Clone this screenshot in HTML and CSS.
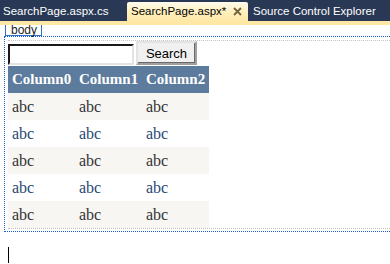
FILE: index.html
```html
<!DOCTYPE html>
<html lang="en">
<head>
    <meta charset="UTF-8">
    <title>SearchPage.aspx</title>
    <link rel="stylesheet" href="styles.css">
</head>
<body>
    <!-- Document tabs -->
    <div class="tabs">
        <div class="tab">SearchPage.aspx.cs</div>
        <div class="tab active">
            SearchPage.aspx*
            <svg class="close" width="9" height="9" viewBox="0 0 9 9">
                <path d="M1 1 L8 8 M8 1 L1 8" stroke="#75633d" stroke-width="1.8" fill="none"/>
            </svg>
        </div>
        <div class="tab">Source Control Explorer</div>
    </div>
    <div class="tab-strip"></div>

    <!-- Design surface -->
    <div class="designer">
        <div class="tag-label">body</div>
        <div class="sel-body">
            <div class="form">
                <div class="search-row">
                    <input type="text" class="search-input">
                    <button class="search-button">Search</button>
                </div>
                <table class="grid">
                    <tr class="grid-header">
                        <th>Column0</th><th>Column1</th><th>Column2</th>
                    </tr>
                    <tr class="row"><td>abc</td><td>abc</td><td>abc</td></tr>
                    <tr class="alt-row"><td>abc</td><td>abc</td><td>abc</td></tr>
                    <tr class="row"><td>abc</td><td>abc</td><td>abc</td></tr>
                    <tr class="alt-row"><td>abc</td><td>abc</td><td>abc</td></tr>
                    <tr class="row"><td>abc</td><td>abc</td><td>abc</td></tr>
                </table>
            </div>
        </div>
        <div class="caret"></div>
    </div>
</body>
</html>
```

FILE: styles.css
```css
/* Reset */
body {
    margin: 0;
    padding: 0;
    background: #fff;
    overflow: hidden;
    font-family: "Liberation Sans", Arial, sans-serif;
}

/* Tab bar */
.tabs {
    display: flex;
    align-items: flex-end;
    height: 21px;
    background-color: #293955;
}

.tab {
    height: 19px;
    line-height: 19px;
    padding: 0 3px;
    font-size: 11.5px;
    color: #fff;
    white-space: nowrap;
}

.tab:first-child {
    width: 121px;
}

.tab.active {
    display: flex;
    align-items: center;
    width: 113px;
    padding: 0 4px;
    color: #000;
    background: linear-gradient(#fffbee, #fff0bf 50%, #ffe8a6);
    border-radius: 2px 2px 0 0;
}

.tab.active .close {
    margin-left: auto;
    margin-right: 2px;
}

.tab.active + .tab {
    padding-left: 5px;
}

.tab-strip {
    height: 4px;
    background-color: #ffe8a6;
}

/* Designer */
.designer {
    height: 239px;
}

.tag-label {
    width: max-content;
    margin-left: 5px;
    height: 10px;
    line-height: 10px;
    padding: 0 4px 0 5px;
    font-size: 12px;
    color: #1e1e1e;
    border: 1px solid #2f6fc8;
    border-top: none;
}

.sel-body {
    margin-left: 4px;
    padding: 3px 0 2px 3px;
    border: 1px dotted #1c5ad0;
    border-right: none;
}

.form {
    border-top: 1px dotted #c4c4c4;
    border-bottom: 1px dotted #c4c4c4;
}

.search-row {
    display: flex;
    align-items: flex-end;
    gap: 2px;
    height: 24px;
    margin-bottom: 1px;
}

.search-input {
    box-sizing: border-box;
    width: 126px;
    height: 21px;
    margin: 0;
    border: 2px inset #e3e3e3;
    border-top-color: #6e6e6e;
    border-left-color: #6e6e6e;
    background: #fff;
}

.search-button {
    box-sizing: border-box;
    width: 61px;
    height: 24px;
    margin: 0;
    padding: 0;
    font-family: "Liberation Sans", Arial, sans-serif;
    font-size: 13px;
    color: #000;
    background: #f0f0f0;
    border: 2px solid #a0a0a0;
    border-top-color: #e3e3e3;
    border-left-color: #e3e3e3;
    box-shadow: inset -1px -1px 0 #696969;
}

/* GridView */
.grid {
    border-collapse: collapse;
    width: 201px;
    font-family: "Liberation Serif", "Times New Roman", serif;
    font-size: 16px;
}

.grid th,
.grid td {
    width: 67px;
    height: 27px;
    padding: 0 0 0 4px;
    text-align: left;
    box-sizing: border-box;
}

.grid-header {
    background-color: #5d7b9d;
    color: #fff;
}

.grid-header th {
    font-size: 15px;
    font-weight: bold;
}

.row {
    background-color: #f7f6f3;
    color: #333333;
}

.alt-row {
    background-color: #fff;
    color: #284775;
}

/* Text cursor */
.caret {
    width: 1px;
    height: 16px;
    margin: 15px 0 0 8px;
    background: #000;
}
```
